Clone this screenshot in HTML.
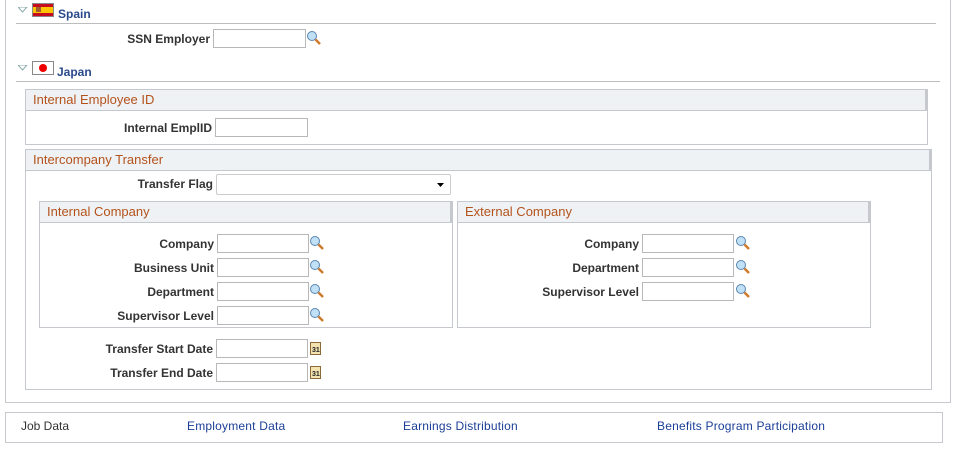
<!DOCTYPE html>
<html><head><meta charset="utf-8"><style>
body{margin:0;width:958px;height:449px;background:#fff;position:relative;overflow:hidden;font-family:"Liberation Sans",Arial,sans-serif;font-size:12px;color:#333}
div,span{position:absolute;box-sizing:border-box}
.box{border:1px solid #c5c9cd;background:#fff}
.hd{background:#eff2f4;border-bottom:1px solid #c5c9cd;border-right:2px solid #c5c9cd;left:0;right:0;top:0;height:21px;color:#b4521c;font-size:13px;line-height:20px;padding-left:7px}
.lb{font-weight:bold;text-align:right;height:18px;line-height:20px;white-space:nowrap}
.in{border:1px solid #b8b8b8;background:#fff;height:19px}
.hr{height:1px;background:#bdbdbd}
.sec{font-weight:bold;color:#2a4a8c;font-size:12px}
.lk{color:#1b3f96;font-size:12px;letter-spacing:0.2px}
</style></head><body>
<div style="left:5px;top:0;width:946px;height:403px;border-left:1px solid #c5c9cd;border-right:1px solid #c5c9cd;border-bottom:1px solid #c5c9cd"></div>
<!-- Spain -->
<svg style="position:absolute;left:18px;top:7px" width="10" height="6"><path d="M0 0H9L4.5 5Z" fill="#fff" stroke="#8aa"/></svg>
<div style="left:32px;top:3px;width:22px;height:14px;border:1px solid #888;background:linear-gradient(#c60b1e 0 25%,#ffc400 25% 75%,#c60b1e 75%)"><span style="left:3px;top:3px;width:5px;height:5px;background:#a05a2c"></span></div>
<div class="sec" style="left:58px;top:7px">Spain</div>
<div class="hr" style="left:16px;top:23px;width:920px"></div>
<div class="lb" style="right:748px;top:29px">SSN Employer</div>
<div class="in" style="left:213px;top:29px;width:93px"></div>
<svg style="position:absolute;left:306px;top:30px" width="16" height="16"><circle cx="6" cy="6" r="4.5" fill="#bfe0f5" stroke="#5a86b0"/><path d="M9.5 9.5L14 14" stroke="#d07a2a" stroke-width="2.5"/></svg>
<!-- Japan -->
<svg style="position:absolute;left:18px;top:65px" width="10" height="6"><path d="M0 0H9L4.5 5Z" fill="#fff" stroke="#8aa"/></svg>
<div style="left:32px;top:61px;width:22px;height:14px;border:1px solid #888;background:#fff"><span style="left:6px;top:2px;width:8px;height:8px;border-radius:50%;background:#e00"></span></div>
<div class="sec" style="left:57px;top:65px">Japan</div>
<div class="hr" style="left:16px;top:81px;width:924px"></div>
<!-- Internal Employee ID -->
<div class="box" style="left:25px;top:89px;width:903px;height:56px"><div class="hd">Internal Employee ID</div></div>
<div class="lb" style="right:746px;top:118px">Internal EmplID</div>
<div class="in" style="left:215px;top:118px;width:93px"></div>
<!-- Intercompany -->
<div class="box" style="left:25px;top:149px;width:907px;height:241px"><div class="hd">Intercompany Transfer</div></div>
<div class="lb" style="right:745px;top:174px">Transfer Flag</div>
<div class="in" style="left:216px;top:174px;width:235px;height:21px;border-color:#ccc;border-radius:2px"><svg style="position:absolute;left:220px;top:8px" width="8" height="5"><path d="M0 0H7L3.5 4Z" fill="#000"/></svg></div>
<div class="box" style="left:39px;top:201px;width:414px;height:127px"><div class="hd">Internal Company</div></div>
<div class="box" style="left:457px;top:201px;width:414px;height:127px"><div class="hd">External Company</div></div>
<div class="lb" style="right:744px;top:234px">Company</div>
<div class="lb" style="right:744px;top:258px">Business Unit</div>
<div class="lb" style="right:744px;top:282px">Department</div>
<div class="lb" style="right:744px;top:306px">Supervisor Level</div>
<div class="in" style="left:217px;top:234px;width:92px"></div>
<div class="in" style="left:217px;top:258px;width:92px"></div>
<div class="in" style="left:217px;top:282px;width:92px"></div>
<div class="in" style="left:217px;top:306px;width:92px"></div>
<div class="lb" style="right:319px;top:234px">Company</div>
<div class="lb" style="right:319px;top:258px">Department</div>
<div class="lb" style="right:319px;top:282px">Supervisor Level</div>
<div class="in" style="left:642px;top:234px;width:92px"></div>
<div class="in" style="left:642px;top:258px;width:92px"></div>
<div class="in" style="left:642px;top:282px;width:92px"></div>
<svg style="position:absolute;left:0;top:0" width="958" height="449">
<defs><g id="m"><circle cx="6" cy="6" r="4.5" fill="#bfe0f5" stroke="#5a86b0"/><path d="M9.5 9.5L14 14" stroke="#d07a2a" stroke-width="2.5"/></g>
<g id="c"><rect x="0.5" y="1.5" width="10" height="12" fill="#f3e3b0" stroke="#8a6a3a"/><text x="2" y="11" font-size="7" font-family="Liberation Sans" font-weight="bold" fill="#222">31</text></g></defs>
<use href="#m" x="309" y="235"/><use href="#m" x="309" y="259"/><use href="#m" x="309" y="283"/><use href="#m" x="309" y="307"/>
<use href="#m" x="735" y="235"/><use href="#m" x="735" y="259"/><use href="#m" x="735" y="283"/>
<use href="#c" x="310" y="341"/><use href="#c" x="310" y="365"/>
</svg>
<div class="lb" style="right:745px;top:339px">Transfer Start Date</div>
<div class="lb" style="right:745px;top:363px">Transfer End Date</div>
<div class="in" style="left:216px;top:339px;width:92px"></div>
<div class="in" style="left:216px;top:363px;width:92px"></div>
<!-- footer -->
<div class="box" style="left:5px;top:412px;width:938px;height:31px"></div>
<div style="left:21px;top:419px;color:#333">Job Data</div>
<div class="lk" style="left:187px;top:419px">Employment Data</div>
<div class="lk" style="left:403px;top:419px">Earnings Distribution</div>
<div class="lk" style="left:657px;top:419px">Benefits Program Participation</div>
</body></html>
